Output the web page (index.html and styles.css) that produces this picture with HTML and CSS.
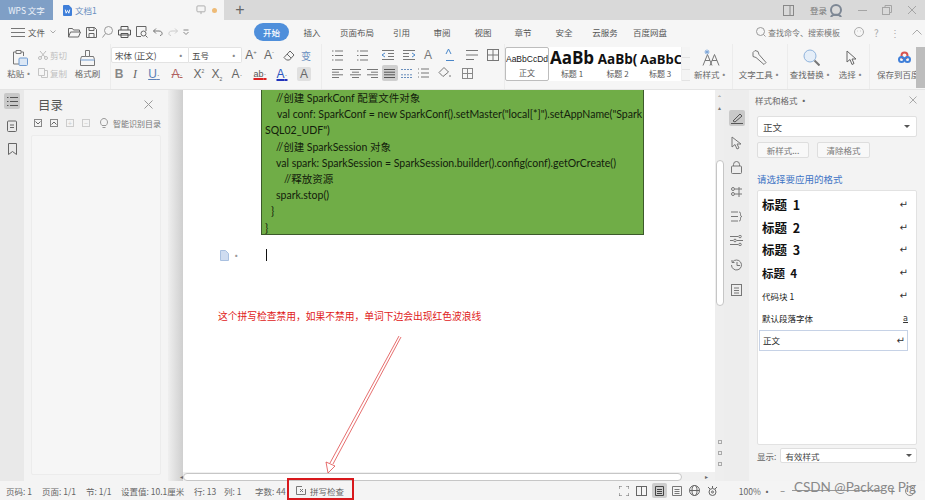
FILE: index.html
```html
<!DOCTYPE html>
<html lang="zh">
<head>
<meta charset="utf-8">
<title>WPS 文字</title>
<link rel="stylesheet" href="styles.css">
</head>
<body>
<div class="app">
  <header class="titlebar">
    <div class="wps-tab">WPS 文字</div>
    <div class="doc-tab">
      <svg width="9" height="11" viewBox="0 0 10 12"><path d="M0 1a1 1 0 0 1 1-1h5.500L10 3.500V11a1 1 0 0 1-1 1H1a1 1 0 0 1-1-1z" fill="#3f7fd9"/><path d="M2.500 5l1 4 1.500-3 1.500 3 1-4" fill="none" stroke="#fff"/></svg>
      <span class="doc-name">文档1</span>
      <svg class="push" width="10" height="10" viewBox="0 0 11 11" fill="none" stroke="#a8a8a8"><rect x="1" y="1" width="9" height="6.500" rx="1"/><path d="M5.500 7.500v2.500"/></svg>
      <i class="dot"></i>
    </div>
    <div class="plus">+</div>
    <div class="win">
      <svg class="w-panel" width="11" height="11" viewBox="0 0 11 11" fill="none" stroke="#888"><rect x=".5" y=".5" width="10" height="10"/><path d="M7 .5v10" /></svg>
      <span class="login">登录</span>
      <svg class="w-avatar" width="14" height="13" viewBox="0 0 14 13" fill="none" stroke="#7d8794" stroke-width="2"><circle cx="7" cy="6" r="5"/><path d="M2 13c1-3 9-3 10 0" /></svg>
      <span class="w-min"></span>
      <svg class="w-res" width="10" height="10" viewBox="0 0 10 10" fill="none" stroke="#a5a5a5"><rect x=".5" y="2.500" width="7" height="7"/><path d="M3 2.500v-2h6.500v7h-2"/></svg>
      <svg class="w-close" width="10" height="10" viewBox="0 0 10 10" stroke="#a5a5a5"><path d="M1 1l8 8M9 1L1 9"/></svg>
    </div>
  </header>

  <nav class="menubar">
    <div class="quick">
      <svg width="14" height="9" viewBox="0 0 14 9" stroke="#777"><path d="M0 .5h14M0 4.500h14M0 8.500h14"/></svg>
      <span class="file">文件</span>
      <svg width="6" height="4" viewBox="0 0 6 4" fill="none" stroke="#aaa"><path d="M.5.500L3 3 5.500.500"/></svg>
      <svg width="13" height="11" viewBox="0 0 13 11" fill="none" stroke="#666"><path d="M.5 10V1.500h4l1 1.500h6v2M.5 10l2-5h10l-2 5z"/></svg>
      <svg width="11" height="11" viewBox="0 0 11 11" fill="none" stroke="#666"><path d="M.5.500h8l2 2v8H.500zM3 .5v3h5v-3M3 10.500v-4h5v4"/></svg>
      <svg width="11" height="12" viewBox="0 0 11 12" fill="none" stroke="#999"><circle cx="6.500" cy="4.500" r="4"/><path d="M3.500 7.500L.5 11.500"/></svg>
      <svg width="13" height="12" viewBox="0 0 13 12" fill="none" stroke="#555"><path d="M3 4V.5h7V4M.5 9V4h12v5zM3 7.500h7v4H3z"/></svg>
      <svg width="12" height="12" viewBox="0 0 12 12" fill="none" stroke="#666"><path d="M10 5V.5H.5v10H5"/><circle cx="7.500" cy="7.500" r="2.500"/><path d="M9.500 9.500l2 2"/></svg>
      <svg width="10" height="8" viewBox="0 0 10 8" fill="none" stroke="#777"><path d="M3 .5L.5 3 3 5.500M.5 3H6c4 0 4 4.500 1 4.500"/></svg>
      <svg width="10" height="8" viewBox="0 0 10 8" fill="none" stroke="#ccc"><path d="M7 .5L9.500 3 7 5.500M9.500 3H4C0 3 0 7.500 3 7.500"/></svg>
      <svg width="6" height="6" viewBox="0 0 6 6" fill="none" stroke="#888"><path d="M.5 1h5M.5 3L3 5.500 5.500 3"/></svg>
    </div>
    <div class="tabs">
      <span class="tab-on">开始</span><span>插入</span><span>页面布局</span><span>引用</span><span>审阅</span><span>视图</span><span>章节</span><span>安全</span><span>云服务</span><span>百度网盘</span>
    </div>
    <div class="menu-right">
      <svg width="10" height="10" viewBox="0 0 10 10" fill="none" stroke="#999"><circle cx="4.500" cy="4.500" r="4"/><path d="M7.500 7.500l2 2"/></svg>
      <span class="search">查找命令、搜索模板</span>
      <svg class="mr-face" width="10" height="10" viewBox="0 0 10 10" fill="none" stroke="#aaa"><circle cx="5" cy="5" r="4.500"/><path d="M3 4h.5M6.500 4H7"/></svg>
      <span class="mr-q">?</span>
      <span class="mr-dots">⋮</span>
      <svg class="mr-up" width="10" height="6" viewBox="0 0 10 6" fill="none" stroke="#aaa"><path d="M.5 5.500L5 1l4.500 4.500"/></svg>
    </div>
  </nav>

  <section class="ribbon">
    <div class="rb-clip">
      <div class="big paste">
        <svg width="16" height="16" viewBox="0 0 16 16" fill="none" stroke="#777"><path d="M4 2H1.500v12H7"/><path d="M4 .5h5v3H4zM9 2h2.500v4"/><rect x="7" y="8" width="8.500" height="7.500" rx="1" stroke="#6f9bd1" fill="#dbe7f5"/></svg>
        <span>粘贴<b>·</b></span>
      </div>
      <div class="clip-small">
        <span class="off"><svg width="10" height="9" viewBox="0 0 10 9" fill="none" stroke="#bbb"><circle cx="2" cy="7" r="1.500"/><circle cx="8" cy="7" r="1.500"/><path d="M3 6l5-6M7 6L2 0"/></svg>剪切</span>
        <span class="off"><svg width="10" height="10" viewBox="0 0 10 10" fill="none" stroke="#c5c5c5"><path d="M.5.500h6v7h-6zM7 2.500h2.500v7h-6V8"/></svg>复制</span>
      </div>
      <div class="big brush">
        <svg width="15" height="16" viewBox="0 0 15 16" fill="none" stroke="#777"><path d="M5.500.5h4v6h-4zM5.500 6.500H1.500l-1 3v6h14v-6l-1-3h-4" /><path d="M.5 10h14" stroke="#6f9bd1"/></svg>
        <span>格式刷</span>
      </div>
    </div>

    <div class="rb-font">
      <div class="font-top">
        <div class="sel sel-font"><span>宋体 (正文)</span><b>·</b></div>
        <div class="sel sel-size"><span>五号</span><b>·</b></div>
        <span class="g1 lg">A<sup>+</sup></span>
        <span class="g1 lg">A<sup>-</sup></span>
        <svg class="erase" width="12" height="11" viewBox="0 0 12 11" fill="none" stroke="#666"><path d="M7 1l4 4-4.500 5h-3L1 7.500z"/><path d="M4 4l4 4"/></svg>
        <span class="bian">变</span>
      </div>
      <div class="font-bot">
        <b class="t-b">B</b><i class="t-i">I</i><span class="t-u">U<small>·</small></span><span class="t-s">A<small>·</small></span>
        <span class="t-x">X<sup>2</sup></span><span class="t-x">X<sub>2</sub></span><span class="t-x">A<small>·</small></span>
        <span class="t-hl">ab<small>·</small></span><span class="t-col">A<small>·</small></span><span class="t-box">A</span>
      </div>
    </div>

    <div class="rb-para">
      <div class="para-top">
        <svg width="14" height="11" viewBox="0 0 14 11" stroke="#777"><path d="M3 1h8M3 5.500h8M3 10h8M0 1h1.500M0 5.500h1.500M0 10h1.500"/></svg>
        <svg width="14" height="11" viewBox="0 0 14 11" stroke="#777"><path d="M3 1h8M3 5.500h8M3 10h8M0 1h1.500M0 5.500h1.500M0 10h1.500"/></svg>
        <svg width="12" height="10" viewBox="0 0 12 10" stroke="#777"><path d="M0 .5h12M6 3.500h6M6 6.500h6M0 9.500h12"/><path d="M3 3L0 5l3 2" stroke="#4a86c8" fill="none"/></svg>
        <svg width="12" height="10" viewBox="0 0 12 10" stroke="#777"><path d="M0 .5h12M0 3.500h6M0 6.500h6M0 9.500h12"/><path d="M9 3l3 2-3 2" stroke="#4a86c8" fill="none"/></svg>
        <span class="t-wide">A</span>
        <svg width="10" height="12" viewBox="0 0 10 12" fill="none" stroke="#4a86c8"><path d="M1 5l2.500-5L6 5M1 11.500h8"/></svg>
        <svg width="12" height="10" viewBox="0 0 12 10" stroke="#777"><path d="M0 .5h12M0 5h12M0 9.500h8"/></svg>
        <svg width="12" height="12" viewBox="0 0 12 12" fill="none" stroke="#777"><rect x=".5" y=".5" width="11" height="11"/><path d="M6 .5v11M.5 6h11"/></svg>
      </div>
      <div class="para-bot">
        <svg width="11" height="9" viewBox="0 0 11 9" stroke="#777"><path d="M0 .5h11M0 3.200h7M0 5.800h11M0 8.500h7"/></svg>
        <svg width="11" height="9" viewBox="0 0 11 9" stroke="#777"><path d="M0 .5h11M2 3.200h7M0 5.800h11M2 8.500h7"/></svg>
        <svg width="11" height="9" viewBox="0 0 11 9" stroke="#777"><path d="M0 .5h11M4 3.200h7M0 5.800h11M4 8.500h7"/></svg>
        <span class="active-al"><svg width="11" height="9" viewBox="0 0 11 9" stroke="#555"><path d="M0 .5h11M0 3.200h11M0 5.800h11M0 8.500h11"/></svg></span>
        <svg width="11" height="9" viewBox="0 0 11 9" stroke="#6a8fbd"><path d="M0 .5h11M0 5.800h11M0 8.500h11" stroke-dasharray="2 1"/></svg>
        <svg width="12" height="10" viewBox="0 0 12 10" stroke="#777"><path d="M3 1h8M3 5h8M3 9h8M0 1h1M0 5h1M0 9h1"/></svg>
        <svg width="13" height="12" viewBox="0 0 13 12" fill="none" stroke="#777"><path d="M6 .5L1 5.500l4 4 5.500-4.500zM12 8v2"/></svg>
        <svg width="11" height="11" viewBox="0 0 11 11" fill="none" stroke="#888"><rect x=".5" y=".5" width="10" height="10"/><path d="M5.500 .5v10M.5 5.500h10"/></svg>
      </div>
    </div>

    <div class="rb-gallery">
      <div class="style-card on"><span class="s-prev">AaBbCcDd</span><span>正文</span></div>
      <div class="style-card c1"><span class="s-h1">AaBb</span><span>标题 1</span></div>
      <div class="style-card c2"><span class="s-h2">AaBb(</span><span>标题 2</span></div>
      <div class="style-card c3"><span class="s-h3">AaBbC</span><span>标题 3</span></div>
      <div class="g-scroll"><i></i><i></i><i></i></div>
    </div>

    <div class="tool t-new">
      <svg width="18" height="16" viewBox="0 0 18 16" fill="none" stroke="#777"><path d="M1 16L5.500 5 10 16M3 11h5M8 16l4.500-11L17 16M10 11h5"/><path d="M5 0v5M2.500 2.500h5M3 1l4 3M7 1L3 4" stroke="#7da6da"/></svg>
      <span>新样式<b>·</b></span>
    </div>
    <div class="tool t-text">
      <svg width="16" height="16" viewBox="0 0 16 16" fill="none" stroke="#777"><path d="M1 3l2-2 3 1 1 3 7 8-2 2-8-7-3-1z"/></svg>
      <span>文字工具<b>·</b></span>
    </div>
    <div class="tool t-find">
      <svg width="17" height="17" viewBox="0 0 17 17" fill="none"><circle cx="7" cy="7" r="6" stroke="#8fb3dc" fill="#e5eef8"/><path d="M11.500 11.500l5 5" stroke="#777" stroke-width="2"/></svg>
      <span>查找替换<b>·</b></span>
    </div>
    <div class="tool t-pick">
      <svg width="11" height="15" viewBox="0 0 11 15" fill="none" stroke="#666"><path d="M1 1v11l3-2.500 2 5 2-1-2-4.500h4z"/></svg>
      <span>选择<b>·</b></span>
    </div>
    <div class="tool t-save">
      <svg class="cloud" width="13" height="12" viewBox="0 0 13 12" fill="none" stroke-width="2"><circle cx="6.500" cy="4" r="3" stroke="#d9534f"/><circle cx="3.500" cy="8" r="2.500" stroke="#3f7fd9"/><circle cx="9.500" cy="8" r="2.500" stroke="#3f7fd9"/></svg>
      <span>保存到百度</span>
    </div>
    <div class="collapse"></div>
  </section>

  <main class="work">
    <aside class="rail-l">
      <span class="rail-on"><svg width="11" height="9" viewBox="0 0 11 9" stroke="#555"><path d="M3 .5h8M3 4.500h8M3 8.500h8M0 .5h1.500M0 4.500h1.500M0 8.500h1.500"/></svg></span>
      <svg width="10" height="12" viewBox="0 0 10 12" fill="none" stroke="#666"><rect x=".5" y="1" width="9" height="10.500" rx="1"/><path d="M3 5h4M3 7.500h4"/></svg>
      <svg width="9" height="12" viewBox="0 0 9 12" fill="none" stroke="#666"><path d="M.5.500h8v11L4.500 8.500.5 11.500z"/></svg>
    </aside>
    <aside class="toc">
      <div class="toc-head"><h2>目录</h2><svg width="9" height="9" viewBox="0 0 9 9" stroke="#999"><path d="M.5.500l8 8M8.500.500l-8 8"/></svg></div>
      <div class="toc-tools">
        <span class="tb"><svg width="6" height="4" viewBox="0 0 6 4" fill="none" stroke="#666"><path d="M.5.500L3 3 5.500.500"/></svg></span>
        <span class="tb"><svg width="6" height="4" viewBox="0 0 6 4" fill="none" stroke="#666"><path d="M.5 3.500L3 1l2.500 2.500"/></svg></span>
        <span class="tb dim">+</span>
        <span class="tb dim">−</span>
        <svg class="bulb" width="8" height="11" viewBox="0 0 8 11" fill="none" stroke="#999"><path d="M2 7.500C-1 4.500 1 .5 4 .5s5 4 2 7zM2.500 9.500h3"/></svg>
        <span class="toc-smart">智能识别目录</span>
      </div>
      <div class="toc-box"></div>
    </aside>
    <div class="gutter"></div>
    <div class="doc-col">
      <div class="doc">
        <div class="code">
          <p class="in1">//创建 SparkConf 配置文件对象</p>
          <p class="in1b">val conf: SparkConf = new SparkConf().setMaster("local[*]").setAppName("Spark</p>
          <p>SQL02_UDF")</p>
          <p class="in1">//创建 SparkSession 对象</p>
          <p class="in1">val spark: SparkSession = SparkSession.builder().config(conf).getOrCreate()</p>
          <p class="in2">//释放资源</p>
          <p class="in1">spark.stop()</p>
          <p class="in3">}</p>
          <p>}</p>
        </div>
        <div class="para-row">
          <svg width="9" height="11" viewBox="0 0 9 11" fill="#cfdcf0" stroke="#a9c0e0"><path d="M.5.500h5l3 3v7h-8z"/></svg>
          <b class="mini">·</b>
          <i class="caret"></i>
        </div>
        <p class="note">这个拼写检查禁用，如果不禁用，单词下边会出现红色波浪线</p>
      </div>
      <div class="hscroll">
        <span class="arr">◂</span>
        <span class="hthumb"></span>
        <span class="arr ar">▸</span>
      </div>
    </div>
    <div class="vscroll">
      <span class="v-arrs">⌃<br>▴</span>
      <span class="vthumb"></span>
      <span class="v-bot"><i></i><i></i><i></i></span>
    </div>
    <aside class="rail-r">
      <span class="rail-on big-on"><svg width="12" height="11" viewBox="0 0 12 11" fill="none" stroke="#555"><path d="M2 8l7-7 2 2-7 6zM0 10.500h12"/></svg></span>
      <svg width="11" height="14" viewBox="0 0 11 14" fill="none" stroke="#777"><path d="M1 1v10l3-2.500 2 4.500 2-1-2-4h4z"/></svg>
      <svg width="11" height="13" viewBox="0 0 11 13" fill="none" stroke="#777"><rect x=".5" y="5" width="10" height="7.500" rx="1"/><path d="M2.500 5V3.500a3 3 0 0 1 6 0V5"/></svg>
      <svg width="12" height="12" viewBox="0 0 12 12" fill="none" stroke="#777"><circle cx="2" cy="3" r="1.500"/><circle cx="2" cy="8" r="1.500"/><path d="M4 3h7M4 8h7M8 1v10"/></svg>
      <svg width="11" height="11" viewBox="0 0 11 11" fill="none" stroke="#777"><path d="M0 1h7M0 5.500h7M0 10h7M8 1c3 0 0 4.500 3 4.500-3 0 0 4.500-3 4.500"/></svg>
      <svg width="13" height="11" viewBox="0 0 13 11" fill="none" stroke="#777"><path d="M0 1.500h8M0 5.500h3M7 5.500h6M0 9.500h8"/><circle cx="10" cy="1.500" r="1.300"/><circle cx="5" cy="5.500" r="1.300"/><circle cx="10" cy="9.500" r="1.300"/></svg>
      <svg width="12" height="12" viewBox="0 0 12 12" fill="none" stroke="#777"><path d="M1.500 3a5 5 0 1 1-1 3M1 1v2.500h2.500M6 3v3.500h3"/></svg>
      <svg width="11" height="12" viewBox="0 0 11 12" fill="none" stroke="#777"><rect x=".5" y=".5" width="10" height="11"/><path d="M3 4h5M3 6.500h5M3 9h5"/></svg>
    </aside>
    <aside class="styles">
      <div class="st-head"><span>样式和格式 <b>·</b></span><svg width="8" height="8" viewBox="0 0 8 8" stroke="#aaa"><path d="M.5.500l7 7M7.500.500l-7 7"/></svg></div>
      <div class="st-select"><span>正文</span><i class="tri"></i></div>
      <div class="st-btns"><span class="btn b-new">新样式...</span><span class="btn b-clear">清除格式</span></div>
      <div class="st-label">请选择要应用的格式</div>
      <ul class="st-list">
        <li class="h1"><span>标题 &nbsp;1</span><em>↵</em></li>
        <li class="h1"><span>标题 &nbsp;2</span><em>↵</em></li>
        <li class="h1"><span>标题 &nbsp;3</span><em>↵</em></li>
        <li class="h4"><span>标题 &nbsp;4</span><em>↵</em></li>
        <li class="pl"><span>代码块 1</span><em>↵</em></li>
        <li class="pl"><span>默认段落字体</span><em class="ua">a</em></li>
        <li class="pl cur"><span>正文</span><em>↵</em></li>
      </ul>
      <div class="st-show"><span>显示:</span><div class="st-sel2"><span>有效样式</span><i class="tri"></i></div></div>
    </aside>
  </main>

  <footer class="status">
    <span class="s1">页码: 1</span><span class="s2">页面: 1/1</span><span class="s3">节: 1/1</span><span class="s4">设置值: 10.1厘米</span><span class="s5">行: 13</span><span class="s6">列: 1</span><span class="s7">字数: 44</span>
    <span class="spell"><svg width="10" height="9" viewBox="0 0 10 9" fill="none" stroke="#777"><path d="M6 .5H.5v8h9V3"/><path d="M4 3l3 3M7 3L4 6"/></svg>拼写检查</span>
    <div class="st-right">
      <svg width="10" height="10" viewBox="0 0 10 10" fill="none" stroke="#666"><path d="M0 3V0h3M7 0h3v3M10 7v3H7M3 10H0V7"/></svg>
      <svg width="11" height="10" viewBox="0 0 11 10" fill="none" stroke="#666"><rect x=".5" y=".5" width="10" height="9"/><path d="M5.500.500v9"/></svg>
      <span class="view-on"><svg width="9" height="10" viewBox="0 0 9 10" fill="none" stroke="#444"><path d="M.5.500h8v9h-8zM2 3.500h5M2 5.500h5M2 7.500h5"/></svg></span>
      <svg width="10" height="10" viewBox="0 0 10 10" fill="none" stroke="#777"><path d="M.5.500h9v9h-9zM2.500 3.500h5M2.500 5.500h5M2.500 7.500h5"/></svg>
      <svg width="11" height="11" viewBox="0 0 11 11" fill="none" stroke="#666"><circle cx="5.500" cy="5.500" r="5"/><ellipse cx="5.500" cy="5.500" rx="2.500" ry="5"/><path d="M.5 5.500h10"/></svg>
      <svg width="11" height="10" viewBox="0 0 11 10" fill="none" stroke="#666"><circle cx="5.500" cy="6" r="3.500"/><circle cx="5.500" cy="6" r="1"/><path d="M1 1l2 2M10 1L8 3M5.500 0v2"/></svg>
      <span class="zoom">100% <b>·</b></span>
      <span class="z-minus">−</span>
      <span class="z-line"><i></i></span>
      <span class="z-plus">+</span>
      <span class="z-fit"></span>
    </div>
  </footer>

  <div class="redbox"></div>
  <svg class="arrow" width="90" height="150" viewBox="0 0 90 150" fill="none" stroke="#e04a4a" stroke-width=".8"><path d="M76 1L7 128M78 2L10 129" /><path d="M3 127L5 138 12 131z" fill="#fff"/></svg>
  <div class="mark">CSDN @Package Pig</div>
</div>
</body>
</html>
```
FILE: styles.css
```css
* { box-sizing: border-box; }
html, body { margin: 0; padding: 0; }
body { font-family: "Noto Sans CJK SC", "Liberation Sans", sans-serif; color: #555; overflow: hidden; }
.app { position: relative; width: 925px; height: 500px; display: flex; flex-direction: column; background: #f3f3f3; overflow: hidden; font-size: 8.500px; }
p, h2, ul { margin: 0; padding: 0; }
svg { display: block; flex: none; }
b { font-weight: 700; }
span { white-space: nowrap; }

/* title bar */
.titlebar { height: 20px; display: flex; align-items: stretch; background: #d9d9d9; flex: none; }
.wps-tab { width: 53px; flex: none; background: #7f9fc6; color: #eef3fa; font-size: 8.500px; display: flex; align-items: center; justify-content: center; }
.doc-tab { width: 171px; flex: none; background: #f5f5f5; display: flex; align-items: center; padding: 0 7px 0 10px; gap: 3px; }
.doc-name { color: #6a8fc0; font-size: 8.500px; }
.push { margin-left: auto; }
.dot { width: 5px; height: 5px; border-radius: 50%; background: #eebb77; margin-left: 3px; }
.plus { width: 32px; flex: none; display: flex; align-items: center; justify-content: center; font: 16px "Liberation Sans", sans-serif; color: #666; }
.win { flex: 1; display: flex; align-items: center; padding-left: 527px; }
.login { margin-left: 16px; color: #777; }
.w-avatar { margin-left: 2px; }
.w-min { width: 9px; height: 1px; background: #a5a5a5; margin-left: 15px; flex: none; }
.w-res { margin-left: 15px; }
.w-close { margin-left: 15px; }

/* menu */
.menubar { height: 24px; flex: none; display: flex; align-items: center; background: #f6f6f6; padding-left: 11px; }
.quick { display: flex; align-items: center; gap: 5px; width: 243px; flex: none; }
.quick > svg:nth-of-type(2) { margin-right: 7px; }
.file { color: #555; margin-left: -2px; }
.tabs { display: grid; grid-template-columns: 35px 46px 44px 45px 36px 46px 34px 48px 34px 56px; justify-items: center; align-items: center; width: 424px; flex: none; }
.tab-on { width: 35px; height: 18px; border-radius: 9px; background: #4f8fdb; color: #fff; display: flex; align-items: center; justify-content: center; font-weight: 500; }
.menu-right { display: flex; align-items: center; margin-left: 78px; color: #888; flex: none; }
.search { margin-left: 2px; color: #777; font-size: 8px; }
.mr-face { margin-left: 14px; }
.mr-q { margin-left: 10px; font-size: 10px; color: #aaa; }
.mr-dots { margin-left: 11px; font-size: 10px; color: #aaa; }
.mr-up { margin-left: 12px; }

/* ribbon */
.ribbon { height: 46px; flex: none; display: flex; background: #f6f6f6; border-bottom: 1px solid #e4e4e4; }
.ribbon b { font-weight: 700; color: #888; }
.rb-clip { width: 111px; flex: none; display: flex; padding-left: 8px; border-right: 1px solid #ececec; }
.big { display: flex; flex-direction: column; align-items: center; padding-top: 6px; gap: 1px; color: #666; }
.paste { width: 24px; }
.brush { width: 27px; margin-left: 0; }
.clip-small { width: 36px; margin-left: 6px; display: flex; flex-direction: column; padding-top: 5px; gap: 6px; }
.off { display: flex; align-items: center; gap: 2px; color: #c0c0c0; height: 12px; }
.rb-font { width: 211px; flex: none; display: flex; flex-direction: column; padding-top: 3px; gap: 1px; border-right: 1px solid #ececec; }
.font-top { display: flex; align-items: center; height: 16px; }
.sel { height: 16px; background: #fff; border: 1px solid #e3e3e3; display: flex; align-items: center; justify-content: space-between; padding: 0 3px; color: #444; flex: none; }
.sel-font { width: 78px; border-radius: 2px 0 0 2px; }
.sel-size { width: 53px; border-left: 0; border-radius: 0 2px 2px 0; }
.g1 { width: 18px; text-align: center; }
.lg { font: 12px "Liberation Sans", sans-serif; color: #666; }
.lg sup { font-size: 6px; line-height: 0; }
.sel + .sel + .g1 { margin-left: 0; }
.erase { margin-left: 5px; }
.bian { margin-left: 6px; font-size: 10px; color: #6a8fc0; }
.font-bot { display: grid; grid-template-columns: 16px 16px 22px 24px 20px 16px 24px 22px 22px 22px; justify-items: center; align-items: center; height: 20px; font: 12px "Liberation Sans", sans-serif; color: #666; }
.font-bot small { font-size: 9px; color: #999; }
.font-bot sup, .font-bot sub { font-size: 5px; line-height: 0; }
.t-b { color: #444; }
.t-i { font-family: "Liberation Serif", serif; }
.t-u { color: #5b7fb5; text-decoration: underline; }
.t-s { color: #b06060; text-decoration: line-through; }
.t-hl { color: #555; font-size: 9px; text-decoration: underline #d22; text-decoration-thickness: 2px; }
.t-col { color: #2a55c0; text-decoration: underline #2233bb; text-decoration-thickness: 2px; }
.t-box { background: #e0e0e0; border-radius: 2px; width: 14px; text-align: center; }
.rb-para { width: 183px; flex: none; display: flex; flex-direction: column; padding-top: 3px; gap: 2px; border-right: 1px solid #ececec; }
.para-top { display: grid; grid-template-columns: 26px 24px 24px 18px 20px 23px 21px 22px; justify-items: center; align-items: center; height: 16px; padding-left: 4px; }
.para-bot { display: grid; grid-template-columns: 20px 16px 18px 17px 17px 17px 25px 21px; justify-items: center; align-items: center; height: 16px; padding-left: 5px; }
.t-wide { font: 12px "Liberation Sans", sans-serif; color: #777; }
.active-al { width: 16px; height: 16px; background: #cfcfcf; border-radius: 2px; display: flex; align-items: center; justify-content: center; }
.rb-gallery { width: 185px; flex: none; margin-top: 3px; height: 34px; background: #fff; display: flex; position: relative; border-radius: 2px; }
.style-card { display: flex; flex-direction: column; align-items: center; justify-content: space-between; color: #555; overflow: hidden; white-space: nowrap; padding: 0 0 2px; font-size: 8px; flex: none; }
.style-card.on { width: 44px; border: 1px solid #bdbdbd; border-radius: 2px; padding-top: 6px; background: #fff; }
.c1 { width: 46px; padding-top: 1px; }
.c2 { width: 45px; padding-top: 3px; }
.c3 { width: 41px; padding-top: 3px; align-items: flex-start; }
.c3 span:last-child { margin-left: 9px; }
.s-prev { font: 8.500px "Liberation Sans", sans-serif; color: #222; }
.s-h1 { font: 700 17px/20px "Open Sans", sans-serif; color: #111; }
.s-h2 { font: 700 13.500px/18px "Open Sans", sans-serif; color: #111; }
.s-h3 { font: 700 13px/18px "Open Sans", sans-serif; color: #111; }
.g-scroll { width: 9px; flex: none; display: flex; flex-direction: column; border-left: 1px solid #eee; background: #f4f4f4; }
.g-scroll i { flex: 1; border-bottom: 1px solid #e3e3e3; }
.tool { display: flex; flex-direction: column; align-items: center; padding-top: 5px; gap: 2px; color: #666; white-space: nowrap; border-right: 1px solid #ececec; flex: none; }
.tool svg { height: 17px; }
.t-new { width: 43px; }
.t-text { width: 55px; }
.t-find { width: 46px; border-right: 0; }
.t-pick { width: 36px; }
.t-save { width: 46px; overflow: hidden; align-items: flex-start; padding-left: 7px; border-right: 0; }
.cloud { margin-left: 21px; }
.collapse { flex: none; width: 9px; margin-top: 3px; height: 41px; background: #bdbdbd; }

/* workspace */
.work { flex: 1; display: flex; min-height: 0; background: #f3f3f3; }
.rail-l { width: 24px; flex: none; background: #e9e9e9; display: flex; flex-direction: column; align-items: center; padding-top: 3px; gap: 11px; }
.rail-on { width: 16px; height: 16px; background: #c9c9c9; border-radius: 2px; display: flex; align-items: center; justify-content: center; flex: none; }
.toc { width: 144px; flex: none; background: #f4f4f4; padding: 5px 7px 6px 7px; display: flex; flex-direction: column; }
.toc-head { display: flex; align-items: center; justify-content: space-between; padding: 0 8px 0 7px; height: 19px; }
.toc h2 { font-size: 12.500px; font-weight: 400; color: #555; }
.toc-tools { display: flex; align-items: center; gap: 8px; height: 16px; margin: 1px 0 4px 3px; }
.tb { width: 8px; height: 8px; border: 1px solid #888; display: flex; align-items: center; justify-content: center; font-size: 7px; line-height: 1; flex: none; }
.tb.dim { border-color: #ccc; color: #ccc; }
.bulb { margin-left: 2px; }
.toc-smart { margin-left: -3px; color: #777; white-space: nowrap; font-size: 8px; }
.toc-box { flex: 1; background: #f6f6f6; border: 1px solid #ececec; border-radius: 2px; }
.gutter { width: 15px; flex: none; background: linear-gradient(90deg, #efefef, #cfcfcf); }
.doc-col { flex: 1; display: flex; flex-direction: column; min-width: 0; }
.doc { flex: 1; background: #fff; padding-left: 78px; }
.code { width: 383px; height: 145px; background: #70ad47; border: 1px solid #3c5a2b; border-top: 0; padding: 0 2px 0 3px; font: 10.500px/16.200px Lato, "Noto Sans CJK SC", sans-serif; color: #12200b; white-space: nowrap; overflow: hidden; }
.code p { height: 16.200px; }
.in1 { padding-left: 11px; }
.in1b { padding-left: 12px; }
.in2 { padding-left: 19px; }
.in3 { padding-left: 6px; }
.para-row { display: flex; align-items: center; height: 14px; margin: 13px 0 0 -41px; }
.mini { margin-left: 3px; color: #999; }
.caret { width: 1px; height: 12px; background: #111; margin-left: 25px; }
.note { margin: 47px 0 0 -43px; color: #e02020; font-size: 9.750px; line-height: 14px; white-space: nowrap; }
.hscroll { height: 9px; background: #f0f0f0; display: flex; align-items: center; position: relative; flex: none; }
.arr { font-size: 6px; color: #666; width: 9px; text-align: center; flex: none; }
.hthumb { width: 499px; height: 8px; background: #fff; border: 1px solid #c6c6c6; border-radius: 4px; margin-left: -3px; flex: none; }
.hscroll .arr:first-child { margin-left: -6px; }
.ar { margin-left: 20px; }
.vscroll { width: 9px; flex: none; background: #eeeeee; display: flex; flex-direction: column; align-items: center; position: relative; }
.v-arrs { font-size: 6px; line-height: 10px; color: #777; text-align: center; margin-top: 3px; height: 67px; }
.vthumb { width: 8px; height: 146px; background: #fff; border: 1px solid #c6c6c6; border-radius: 4px; flex: none; }
.v-bot { margin-top: auto; margin-bottom: 15px; display: flex; flex-direction: column; gap: 7px; }
.v-bot i { display: block; width: 4px; height: 4px; border: 1px solid #aaa; }
.rail-r { width: 25px; flex: none; background: #ededed; display: grid; grid-auto-rows: 24.500px; justify-items: center; align-items: center; align-content: start; padding-top: 16px; }
.big-on { height: 16px; }
.styles { width: 176px; flex: none; background: #f3f3f3; padding: 0 8px; display: flex; flex-direction: column; color: #666; }
.st-head { display: flex; justify-content: space-between; align-items: center; height: 20px; margin: 0 0 6px -2px; }
.st-select { height: 21px; flex: none; background: #fff; border: 1px solid #e0e0e0; border-radius: 2px; display: flex; align-items: center; justify-content: space-between; padding: 0 6px 0 5px; font-size: 9.500px; color: #444; }
.tri { border: 3px solid transparent; border-top: 3px solid #555; border-bottom: 0; }
.st-btns { display: flex; gap: 8px; margin-top: 5px; }
.btn { height: 16px; background: #f8f8f8; border: 1px solid #dedede; border-radius: 2px; display: flex; align-items: center; justify-content: center; color: #777; }
.b-new { width: 52px; }
.b-clear { width: 53px; }
.st-label { color: #3f74c5; font-size: 9.500px; line-height: 14px; margin-top: 14px; }
.st-list { list-style: none; background: #fff; border: 1px solid #e2e2e2; border-radius: 2px; height: 255px; flex: none; margin-top: 4px; padding: 2px 0 0 0; }
.st-list li { height: 22.800px; display: flex; align-items: center; justify-content: space-between; padding: 0 8px 0 4px; color: #222; }
.st-list em { font: 10px "DejaVu Sans", sans-serif; color: #333; }
.st-list .ua { text-decoration: underline; font-size: 8px; }
.st-list .h1 { font-size: 12.500px; font-weight: 700; color: #111; }
.st-list .h4 { font-size: 11.500px; font-weight: 700; color: #111; }
.pl { font-size: 8.500px; }
.st-list .cur { margin: 0 8px 0 1px; height: 21px; padding: 0 2px 0 3px; border: 1px solid #c6d2e6; }
.st-show { display: flex; align-items: center; gap: 4px; margin-top: 3px; }
.st-sel2 { width: 137px; height: 15px; flex: none; background: #fff; border: 1px solid #dedede; border-radius: 2px; display: flex; align-items: center; justify-content: space-between; padding: 0 4px; color: #444; }

/* status */
.status { height: 19px; flex: none; background: #f4f4f4; display: flex; align-items: center; color: #666; white-space: nowrap; position: relative; padding-left: 6px; }
.s1 { width: 36px; } .s2 { width: 44px; } .s3 { width: 35px; } .s4 { width: 73px; } .s5 { width: 30px; } .s6 { width: 31px; } .s7 { width: 41px; }
.spell { display: flex; align-items: center; gap: 4px; }
.st-right { margin-left: auto; display: flex; align-items: center; gap: 7px; padding-right: 10px; }
.view-on { width: 15px; height: 15px; background: #cdcdcd; border-radius: 2px; display: flex; align-items: center; justify-content: center; margin: 0 -2px; }
.zoom { margin-left: 14px; }
.z-minus { margin-left: 2px; }
.z-line { width: 90px; height: 1px; background: #999; position: relative; }
.z-plus { font-size: 11px; }
.z-fit { width: 10px; height: 10px; border: 1px solid #888; margin-left: 3px; border-radius: 50%; }

/* annotations */
.redbox { position: absolute; left: 287px; top: 478px; width: 67px; height: 22px; border: 2px solid #d8181c; }
.arrow { position: absolute; left: 323px; top: 335px; }
.mark { position: absolute; left: 794px; top: 479px; font: 13.500px Lato, sans-serif; color: #8a8a8a; white-space: nowrap; }
```
